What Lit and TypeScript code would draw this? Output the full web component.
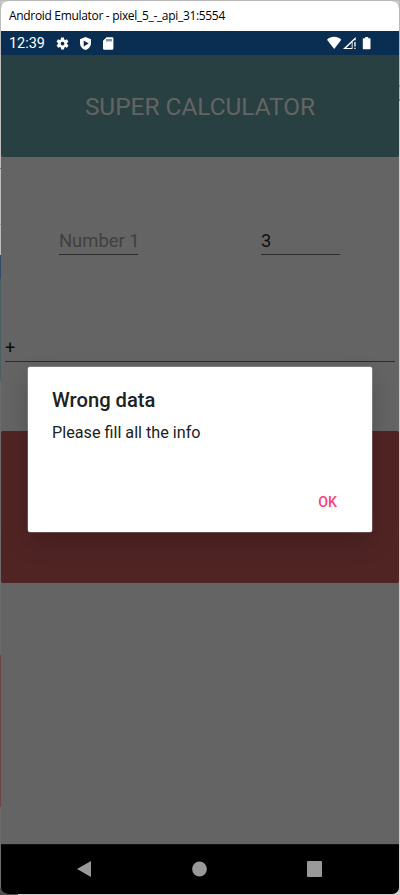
import { LitElement, html, css } from "lit";
import { customElement } from "lit/decorators.js";

@customElement("app-root")
export class AppRoot extends LitElement {
  static styles = css`
    :host {
      display: block;
      box-sizing: border-box;
      width: 400px;
      height: 895px;
      overflow: hidden;
      padding: 1px 1px 1px;
      font-family: Roboto, "Liberation Sans", sans-serif;
      background:
        linear-gradient(#505050, #505050) 0 894px / 18px 1px no-repeat,
        linear-gradient(#505050, #505050) 0 888px / 5px 7px no-repeat,
        linear-gradient(#b98d51, #b98d51) 399px 85px / 1px 2px no-repeat,
        linear-gradient(#b98d51, #b98d51) 399px 99px / 1px 2px no-repeat,
        linear-gradient(#777, #777) 0 168px / 1px 1px no-repeat,
        linear-gradient(#999, #999) 0 224px / 1px 1px no-repeat,
        linear-gradient(
            #bebebe 255px,
            #304b68 255px 279px,
            #4b5f60 279px 381px,
            #6b6b6b 381px 655px,
            #6c4444 655px 807px,
            #6b6b6b 807px
          )
          0 0 / 1px 895px no-repeat,
        linear-gradient(#b9b9b9, #b9b9b9) 0 0 / 400px 1px no-repeat,
        linear-gradient(#b9b9b9, #b9b9b9) 399px 0 / 1px 100px no-repeat,
        #d0d0d0;
    }
    .window {
      position: relative;
      display: flex;
      flex-direction: column;
      height: 893px;
      border-radius: 7px;
      overflow: hidden;
      background: #646464;
    }
    .titlebar {
      flex: 0 0 30px;
      box-sizing: border-box;
      padding-left: 8px;
      background: #fff;
      color: #000;
      font: 12px/30px "Open Sans", "Noto Sans", sans-serif;
      letter-spacing: -0.32px;
      white-space: pre;
    }
    .status {
      flex: 0 0 24px;
      display: flex;
      align-items: center;
      box-sizing: border-box;
      padding: 0 27px 0 8px;
      background: #0a2e52;
      color: #fff;
    }
    .time {
      width: 46px;
      padding-top: 1px;
      font-size: 14.4px;
      line-height: 23px;
    }
    .status svg {
      display: block;
      fill: #fff;
    }
    .left {
      display: flex;
      flex: 1;
      gap: 8px;
    }
    .right {
      display: flex;
      align-items: center;
    }
    .header {
      flex: 0 0 102px;
      box-sizing: border-box;
      height: 102px;
      min-height: 0;
      padding-top: 2px;
      border-radius: 0 0 2px 2px;
      background: #284041;
      color: #646464;
      font-size: 24.4px;
      line-height: 100px;
      text-align: center;
    }
    .fields {
      display: flex;
      justify-content: space-between;
      padding: 70px 59px 0 58px;
    }
    .field {
      box-sizing: border-box;
      width: 79px;
      height: 28px;
      border-bottom: 1px solid #2c2c2c;
      color: #101010;
      font-size: 18.4px;
      line-height: 28px;
      white-space: nowrap;
    }
    .hint {
      color: #404040;
    }
    .operator {
      box-sizing: border-box;
      height: 28px;
      margin: 79px 4px 0;
      border-bottom: 1px solid #2c2c2c;
      color: #0c0c0c;
      font-size: 18px;
      line-height: 27px;
    }
    .result {
      flex: 0 0 152px;
      margin-top: 69px;
      border-radius: 2px;
      background: #512424;
    }
    .nav {
      flex: 0 0 50px;
      display: flex;
      align-items: center;
      justify-content: space-between;
      box-sizing: border-box;
      margin-top: auto;
      padding: 0 76px 2px 76px;
      background: #000;
      border-top: 1px solid #101010;
    }
    .nav svg {
      display: block;
      fill: #999;
    }
    .dialog {
      position: absolute;
      left: 27px;
      top: 366px;
      display: flex;
      flex-direction: column;
      box-sizing: border-box;
      width: 344px;
      height: 165px;
      padding: 21px 35px 19px 24px;
      border-radius: 2px;
      background: #fff;
      box-shadow:
        0 0 0 0.5px rgba(255, 255, 255, 0.4),
        0 10px 24px rgba(0, 0, 0, 0.2);
      color: #212121;
    }
    .heading {
      font-size: 20.2px;
      font-weight: 500;
      line-height: 24px;
    }
    .message {
      margin-top: 11px;
      font-size: 16.2px;
      line-height: 20px;
    }
    .ok {
      margin-top: auto;
      color: #ff4081;
      font-size: 14.2px;
      font-weight: 500;
      line-height: 22px;
      text-align: right;
    }
  `;

  render() {
    return html`
      <div class="window">
        <div class="titlebar">Android Emulator - pixel_5_-_api_31:5554</div>
        <div class="status">
          <div class="time">12:39</div>
          <div class="left">
            <svg width="15" height="15" viewBox="0 0 24 24">
              <path
                d="M19.1 12.9a7 7 0 0 0 0-1.8l2-1.6c.2-.1.3-.4.1-.6l-1.9-3.3c-.1-.2-.4-.3-.6-.2l-2.4 1c-.5-.4-1-.7-1.6-.9l-.4-2.6c0-.2-.2-.4-.5-.4h-3.800c-.2 0-.4.2-.5.4L9.200 5.500c-.6.2-1.100.6-1.600.9l-2.400-1c-.2-.1-.5 0-.6.2L2.700 8.900c-.1.2 0 .5.1.6l2.100 1.600a7 7 0 0 0 0 1.800l-2 1.600c-.2.1-.3.4-.1.6l1.900 3.300c.1.2.4.3.6.2l2.400-1c.5.4 1 .7 1.600.9l.4 2.600c0 .2.2.4.5.4h3.800c.2 0 .4-.2.5-.4l.4-2.600c.6-.2 1.100-.6 1.600-.9l2.400 1c.2.1.5 0 .6-.2l1.900-3.300c.1-.2 0-.5-.1-.6zM12 15a3 3 0 1 1 0-6 3 3 0 0 1 0 6z"
              />
            </svg>
            <svg width="15" height="15" viewBox="0 0 15 15">
              <path
                fill-rule="evenodd"
                d="M7.500 1 13 3.200V7c0 3.300-2.200 6-5.500 7C4.200 13 2 10.300 2 7V3.200zM5.700 4.500v6l5-3z"
              />
            </svg>
            <svg width="15" height="15" viewBox="0 0 15 15">
              <path
                fill-rule="evenodd"
                d="M5.500 1.200H11q1.400 0 1.400 1.300v10q0 1.300-1.400 1.300H3.400Q2 13.800 2 12.500V4.800zM5.500 3v2.500h1V3zm2 0v2.500h1V3zm2 0v2.500h1V3z"
              />
            </svg>
          </div>
          <div class="right">
            <svg width="45" height="14" viewBox="0 0 45 14">
              <path d="M0 3.700C4-.1 10.300-.1 14.300 3.700L7.200 13z" />
              <path
                fill-rule="evenodd"
                d="M16 13 28.700 1V4.300H27.200L19.200 11.900H25.500V13z"
              />
              <path d="M24.700 6h.9v6h-.9z" />
              <path d="M27.300 6h1.300v4.500h-1.300zM27.300 11.700h1.300V13h-1.300z" />
              <path
                d="M38.200 1h3v1.200h1.600q.7 0 .7.7v9.600q0 .7-.7.7h-6.300q-.7 0-.7-.7V2.900q0-.7.7-.7h1.700z"
              />
            </svg>
          </div>
        </div>
        <div class="header">SUPER CALCULATOR</div>
        <div class="fields">
          <div class="field hint">Number 1</div>
          <div class="field">3</div>
        </div>
        <div class="operator">+</div>
        <div class="result"></div>
        <div class="nav">
          <svg width="14" height="16" viewBox="0 0 14 16">
            <path d="M14 0v16L0 8z" />
          </svg>
          <svg width="16" height="16" viewBox="0 0 16 16">
            <circle cx="8.500" cy="8" r="7.400" />
          </svg>
          <svg width="16" height="16" viewBox="0 0 16 16">
            <rect width="15" height="16" rx="1" />
          </svg>
        </div>
        <div class="dialog">
          <div class="heading">Wrong data</div>
          <div class="message">Please fill all the info</div>
          <div class="ok">OK</div>
        </div>
      </div>
    `;
  }
}
